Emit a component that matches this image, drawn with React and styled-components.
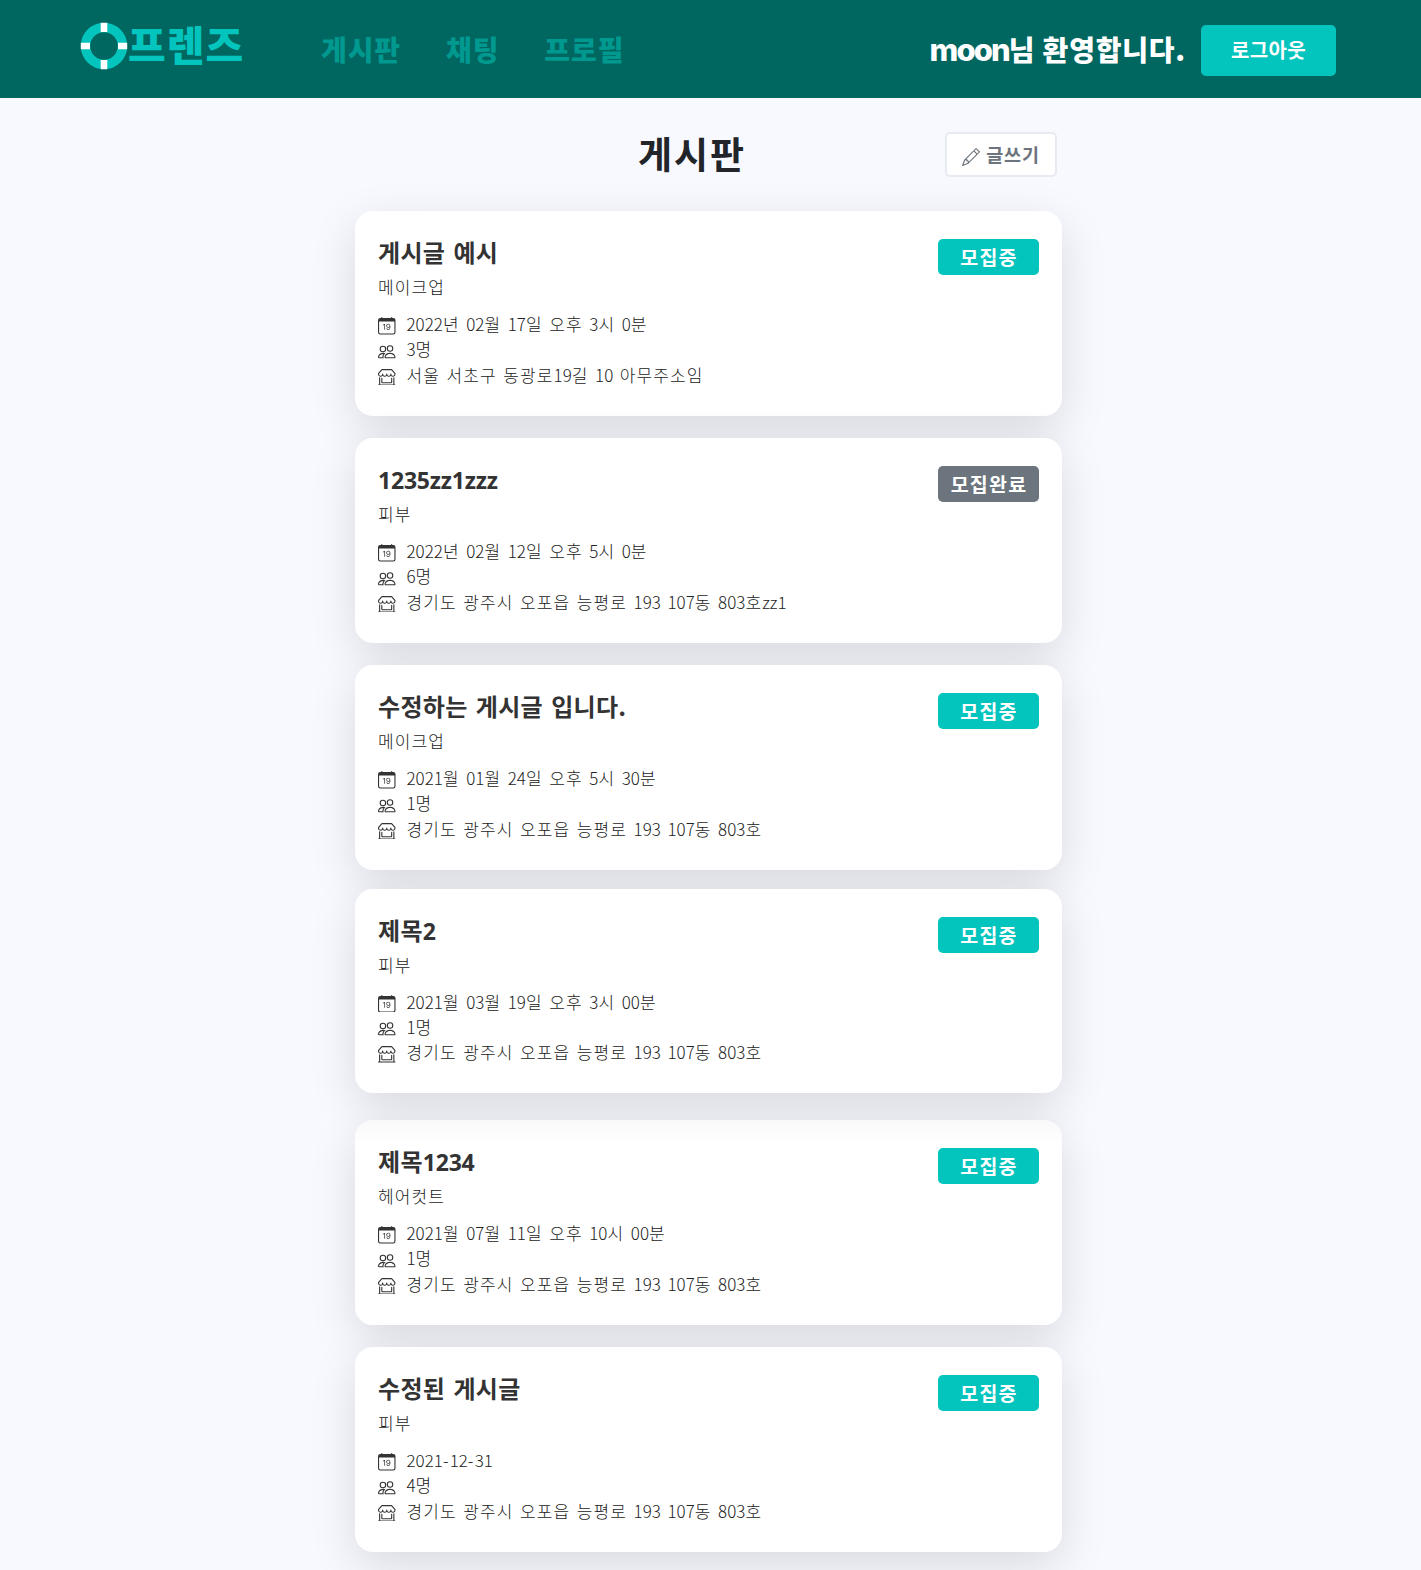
import React from 'react';
import styled, { createGlobalStyle } from 'styled-components';
import { BsCalendarDate, BsPeople, BsShopWindow, BsPencil } from 'react-icons/bs';

const kr = '"Noto Sans CJK KR", sans-serif';

const GlobalStyle = createGlobalStyle`
  * { box-sizing: border-box; }
  html, body { height: 1570px; overflow: hidden; }
  body {
    margin: 0;
    background: #f8f9fe;
    color: #333;
    font-family: ${kr};
  }
`;

/* Latin letters and digits set inside Korean text */
const Latin = styled.span`
  font-family: ${(p) => p.$face || 'inherit'};
  font-weight: ${(p) => p.$weight || 'inherit'};
  font-size: ${(p) => p.$size || 'inherit'};
  letter-spacing: ${(p) => p.$spacing || '0'};
  line-height: 0;
`;

function Mixed({ text, ...latin }) {
  return text
    .split(/([A-Za-z0-9]+)/)
    .filter(Boolean)
    .map((part, i) =>
      /^[A-Za-z0-9]/.test(part) ? (
        <Latin key={i} {...latin}>
          {part}
        </Latin>
      ) : (
        part
      )
    );
}

const Header = styled.header`
  display: flex;
  align-items: flex-start;
  height: 98px;
  padding: 0 85px 0 80px;
  background: #006660;
`;

const Logo = styled.a`
  display: flex;
  align-items: center;
  width: 241px;
  height: 47px;
  margin-top: 22px;
`;

const LogoText = styled.span`
  font-size: 41px;
  font-weight: 900;
  line-height: 40px;
  letter-spacing: 1px;
  color: #03c5be;
  margin-top: -5px;
`;

const Nav = styled.nav`
  display: flex;
  gap: 45px;
  margin-top: 29px;
`;

const NavLink = styled.a`
  font-size: 28px;
  font-weight: 900;
  line-height: 40px;
  letter-spacing: 0.9px;
  color: #009990;
`;

const Account = styled.div`
  display: flex;
  margin-left: auto;
`;

const Welcome = styled.span`
  margin-top: 29px;
  padding-right: 15px;
  font-size: 28px;
  font-weight: 900;
  line-height: 40px;
  letter-spacing: 0.8px;
  white-space: nowrap;
  color: #fff;
`;

const LogoutButton = styled.button`
  width: 135px;
  height: 51px;
  margin-top: 25px;
  padding: 0 0 2px;
  border: 0;
  border-radius: 5px;
  background: #03c5be;
  color: #fff;
  font: 700 20px/49px ${kr};
  letter-spacing: 0.3px;
`;

const Board = styled.main`
  width: 707px;
  margin-left: 355px;
`;

const BoardHead = styled.div`
  display: flex;
  justify-content: space-between;
  height: 113px;
  padding: 34px 5px 0 283px;
`;

const Heading = styled.h1`
  margin: 0;
  font-size: 37px;
  font-weight: 700;
  line-height: 42px;
  letter-spacing: 2px;
  color: #212529;
`;

const WriteButton = styled.button`
  display: flex;
  align-items: center;
  justify-content: center;
  gap: 6px;
  width: 112px;
  height: 45px;
  padding: 0 0 2px;
  border: 2px solid #e8eaf2;
  border-radius: 5px;
  background: #fff;
  color: #6c757d;
  font: 700 18.5px/38px ${kr};
  letter-spacing: 0.8px;

  svg {
    width: 18px;
    height: 18px;
    margin-top: 7px;
  }
`;

const Card = styled.article`
  display: flex;
  justify-content: space-between;
  align-items: flex-start;
  height: ${(p) => p.$height || 205}px;
  margin-bottom: ${(p) => p.$gap || 22}px;
  padding: 27px 23px 0;
  border-radius: 18px;
  background: ${(p) => (p.$shaded ? 'linear-gradient(#f9f9f9, #fff 25px)' : '#fff')};
  box-shadow: 0 14px 46px rgba(0, 0, 0, 0.125);
`;

const Title = styled.h2`
  margin: 0 0 8px;
  font-size: 24px;
  font-weight: 700;
  line-height: 28px;
  letter-spacing: 0.3px;
  word-spacing: 2.5px;
`;

const Category = styled.p`
  margin: 0 0 11px;
  font-size: 17px;
  font-weight: 300;
  line-height: 26px;
  letter-spacing: 1.1px;
  color: #222;
`;

const Detail = styled.div`
  display: flex;
  align-items: center;
  gap: 11px;
  height: 25.3px;
  font-size: 17px;
  font-weight: 300;
  line-height: 25.3px;
  letter-spacing: 1.1px;
  word-spacing: 1.7px;
  white-space: pre;
  color: #222;

  svg {
    width: 17.5px;
    height: 17.5px;
    margin-top: 5px;
    color: #333;
  }
`;

const Badge = styled.span`
  width: 101px;
  height: 36px;
  margin-top: 1px;
  border-radius: 5px;
  background: ${(p) => (p.$closed ? '#6c757d' : '#03c5be')};
  color: #fff;
  font-size: 19.5px;
  font-weight: 700;
  line-height: 35px;
  letter-spacing: 1.2px;
  text-indent: 1px;
  text-align: center;
`;

const posts = [
  { title: '게시글 예시', category: '메이크업', date: '2022년 02월 17일 오후 3시 0분', people: 3, address: '서울 서초구 동광로19길 10 아무주소임' },
  { title: '1235zz1zzz', category: '피부', date: '2022년 02월 12일 오후 5시 0분', people: 6, address: '경기도 광주시 오포읍 능평로 193 107동 803호zz1', closed: true },
  { title: '수정하는 게시글 입니다.', category: '메이크업', date: '2021월 01월 24일 오후 5시 30분', people: 1, address: '경기도 광주시 오포읍 능평로 193 107동 803호', gap: 18.5 },
  { title: '제목2', category: '피부', date: '2021월 03월 19일 오후 3시 00분', people: 1, address: '경기도 광주시 오포읍 능평로 193 107동 803호', height: 204, gap: 27.5 },
  { title: '제목1234', category: '헤어컷트', date: '2021월 07월 11일 오후 10시 00분', people: 1, address: '경기도 광주시 오포읍 능평로 193 107동 803호', shaded: true },
  { title: '수정된 게시글', category: '피부', date: '2021-12-31', people: 4, address: '경기도 광주시 오포읍 능평로 193 107동 803호' },
];

function Lifebuoy() {
  return (
    <svg width="48" height="48" viewBox="0 0 48 48" aria-hidden="true">
      <circle cx="24" cy="24" r="18.5" fill="none" stroke="#03c5be" strokeWidth="9.4" />
      <path d="M24 .8V10M24 38v9.2M.8 24H10M38 24h9.2" stroke="#fff" strokeWidth="6.6" />
    </svg>
  );
}

function Post({ post }) {
  return (
    <Card $height={post.height} $gap={post.gap} $shaded={post.shaded}>
      <div>
        <Title>
          <Mixed text={post.title} $face='"Open Sans", sans-serif' $size="23px" $spacing="-0.2px" />
        </Title>
        <Category>{post.category}</Category>
        <Detail>
          <BsCalendarDate />
          <span><Mixed text={post.date} /></span>
        </Detail>
        <Detail>
          <BsPeople />
          <span><Mixed text={`${post.people}명`} /></span>
        </Detail>
        <Detail>
          <BsShopWindow />
          <span><Mixed text={post.address} /></span>
        </Detail>
      </div>
      <Badge $closed={post.closed}>{post.closed ? '모집완료' : '모집중'}</Badge>
    </Card>
  );
}

export default function App() {
  return (
    <>
      <GlobalStyle />
      <Header>
        <Logo>
          <Lifebuoy />
          <LogoText>프렌즈</LogoText>
        </Logo>
        <Nav>
          <NavLink>게시판</NavLink>
          <NavLink>채팅</NavLink>
          <NavLink>프로필</NavLink>
        </Nav>
        <Account>
          <Welcome>
            <Mixed text="moon님 환영합니다." $face="Inter, sans-serif" $weight="800" $size="31px" $spacing="-1.9px" />
          </Welcome>
          <LogoutButton>로그아웃</LogoutButton>
        </Account>
      </Header>
      <Board>
        <BoardHead>
          <Heading>게시판</Heading>
          <WriteButton>
            <BsPencil />
            글쓰기
          </WriteButton>
        </BoardHead>
        {posts.map((post) => (
          <Post key={post.title} post={post} />
        ))}
      </Board>
    </>
  );
}
